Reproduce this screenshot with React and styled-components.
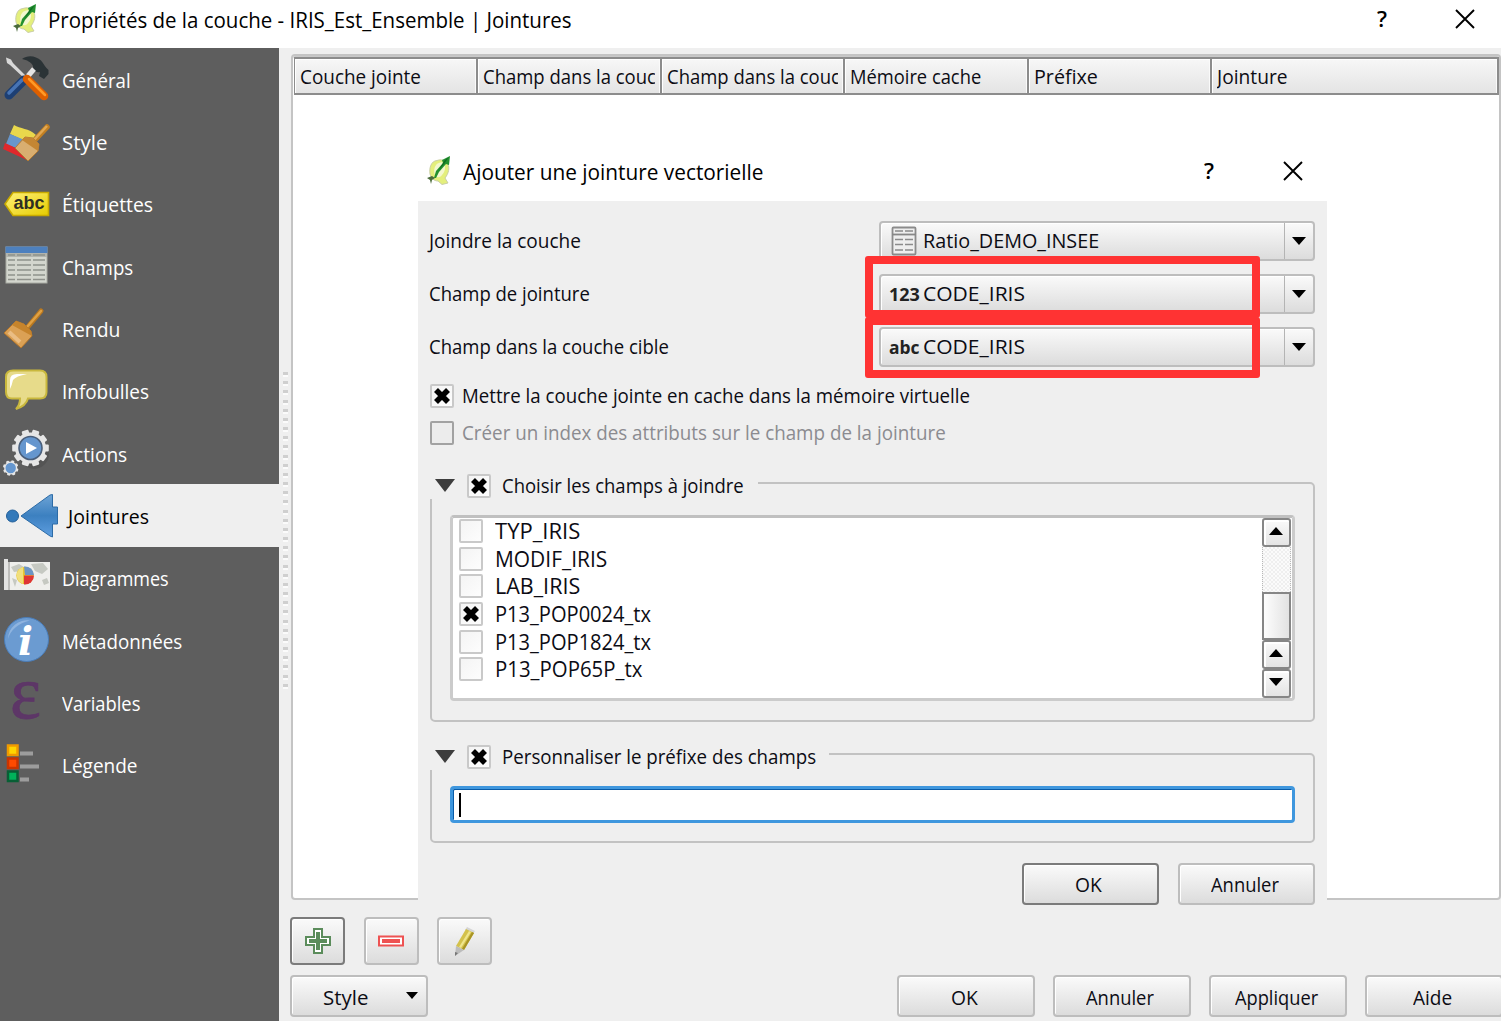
import React, { useLayoutEffect, useRef, useState } from "react";
import styled, { createGlobalStyle, css } from "styled-components";

const ui = `"Open Sans", "Noto Sans", "Liberation Sans", sans-serif`;

const GlobalStyle = createGlobalStyle`
  *, *::before, *::after { box-sizing: border-box; }
  body { margin: 0; background: #efefef; overflow: hidden; font-family: ${ui}; font-size: 20px; color: #0c0c14; }
`;

/* ---------- text set to a given measure ---------- */
const Measure = styled.span`
  display: inline-block;
  flex: none;
  width: ${(p) => p.$w}px;
  font-size: ${(p) => p.$size || 20}px;
  line-height: 28px;
  height: 28px;
  white-space: nowrap;
  text-align: left;
`;
const Run = styled.span`
  display: inline-block;
  transform-origin: 0 50%;
`;
function Label({ w, size, children }) {
  const ref = useRef(null);
  const [k, setK] = useState(1);
  useLayoutEffect(() => {
    setK(w / ref.current.offsetWidth);
  }, [w, children]);
  return (
    <Measure $w={w} $size={size}>
      <Run ref={ref} style={{ transform: `scaleX(${k})` }}>{children}</Run>
    </Measure>
  );
}

/* ---------- window ---------- */
const Window = styled.div`
  position: relative;
  width: 1501px;
  height: 1021px;
  overflow: hidden;
  display: flex;
  flex-direction: column;
  background: #efefef;
`;
const TitleBar = styled.header`
  flex: none;
  height: ${(p) => p.$h}px;
  background: #fff;
  display: flex;
  align-items: flex-start;
  padding: ${(p) => p.$pad};
  color: #000;
`;
const TitleText = styled.div`
  margin: ${(p) => p.$m};
  flex: 1;
  display: flex;
`;
const Glyph = styled.span`
  font-size: 22px;
  font-weight: 600;
  line-height: 28px;
  width: 11px;
  margin: ${(p) => p.$m};
`;
const CloseIcon = styled.svg`
  flex: none;
  width: 20px;
  height: 20px;
  margin: ${(p) => p.$m};
`;
const Body = styled.div`
  flex: 1;
  display: flex;
  min-height: 0;
`;

/* ---------- sidebar ---------- */
const Sidebar = styled.nav`
  flex: none;
  width: 279px;
  background: #5e5e5e;
`;
const NavItem = styled.div`
  height: 62.35px;
  display: flex;
  align-items: center;
  gap: 2px;
  color: #fff;
  ${(p) =>
    p.$active &&
    css`
      background: #efefef;
      color: #000;
      gap: 8px;
    `}
`;
const NavIcon = styled.svg`
  flex: none;
  width: 60px;
  height: 62px;
  overflow: visible;
`;
const NavText = styled.div`
  padding-top: 3px;
  display: flex;
`;
const Splitter = styled.div`
  flex: none;
  width: 12px;
  padding: 324px 0 0 4px;
`;
const Grip = styled.div`
  width: 5px;
  height: 318px;
  background: repeating-linear-gradient(to bottom, #cfcfcf 0 3px, #fbfbfb 3px 5px, transparent 5px 9.17px);
`;

/* ---------- main pane ---------- */
const Main = styled.main`
  flex: 1;
  min-width: 0;
  padding-top: 6px;
  display: flex;
  flex-direction: column;
`;
const Table = styled.div`
  width: 1210px;
  height: 846px;
  background: #fff;
  border: 2px solid #c4c4c4;
  border-radius: 4px;
  padding: 1px 1px 0 1px;
  box-shadow: inset 0 1px 0 #c9c9c9;
`;
const HeadRow = styled.div`
  display: grid;
  grid-template-columns: 183.4px 183.4px 183.4px 183.4px 183.4px 288px;
  height: 38px;
`;
const HeadCell = styled.div`
  border: 2px solid #8c8c8c;
  border-left-width: 1px;
  border-right-width: ${(p) => (p.$last ? 2 : 1)}px;
  box-shadow: inset 1px 1px 0 #fff, inset -1px 0 0 #fafafa;
  background: linear-gradient(#f7f7f7, #e4e4e4);
  padding: 4px 5px 0 5px;
  overflow: hidden;
`;
const Clip = styled.div`
  overflow: hidden;
  height: 29px;
`;

const face = css`
  border: 2px solid ${(p) => (p.$strong ? "#7b7b7b" : "#bdbdbd")};
  border-radius: 4px;
  background: linear-gradient(#fafafa, #dcdcdc);
  box-shadow: inset 1px 1px 0 #fff;
`;
const Tools = styled.div`
  display: flex;
  gap: 18.3px;
  margin: 17px 0 0 -0.6px;
`;
const ToolButton = styled.div`
  ${face}
  width: 55px;
  height: 48px;
  display: flex;
  align-items: center;
  justify-content: center;
`;
const Footer = styled.div`
  display: flex;
  margin: 10px 0 0 -0.6px;
`;
const Actions = styled.div`
  display: flex;
  gap: 18.6px;
  margin-left: 469.4px;
`;
const Button = styled.div`
  ${face}
  flex: none;
  width: ${(p) => p.$w || 137.4}px;
  height: 42px;
  display: flex;
  align-items: center;
  justify-content: center;
  padding: 3px 3px 0 0;
`;
const StyleButton = styled(Button)`
  justify-content: flex-start;
  padding-left: 31px;
  gap: 38px;
`;
const Down = styled.span`
  width: 0;
  height: 0;
  border: ${(p) => p.$s}px solid transparent;
  border-top: ${(p) => p.$t}px solid ${(p) => p.$c || "#000"};
  border-bottom: 0;
  margin-bottom: ${(p) => p.$mb || 0}px;
`;
const Up = styled.span`
  width: 0;
  height: 0;
  border: 7px solid transparent;
  border-bottom: 8px solid #000;
  border-top: 0;
  margin-bottom: 3px;
`;

/* ---------- dialog ---------- */
const Dialog = styled.section`
  position: absolute;
  left: 418px;
  top: 145px;
  width: 909px;
  height: 765px;
  background: #efefef;
`;
const Form = styled.div`
  padding: 20px 12px 0 11px;
  display: flex;
  flex-direction: column;
`;
const Field = styled.div`
  display: flex;
  justify-content: space-between;
  height: 40px;
  margin-bottom: 13px;
`;
const FieldLabel = styled.div`
  padding-top: 6px;
`;
const Combo = styled.div`
  ${face}
  width: 436px;
  display: flex;
`;
const ComboValue = styled.div`
  flex: 1;
  display: flex;
  align-items: center;
  padding: 0 0 0 8px;
`;
const ComboIcon = styled.span`
  width: 34px;
  height: 30px;
  display: flex;
  align-items: center;
  padding-left: ${(p) => p.$pad || 0}px;
  font-weight: bold;
  color: #222;
`;
const ComboArrow = styled.div`
  width: 29px;
  border-left: 1.5px solid #b4b4b4;
  display: flex;
  align-items: center;
  justify-content: center;
`;
const Highlight = styled.div`
  position: absolute;
  left: 447px;
  top: ${(p) => p.$top}px;
  width: 395px;
  height: ${(p) => p.$h}px;
  border: 8px solid #ff3333;
  border-radius: 3px;
`;
const CheckRow = styled.div`
  display: flex;
  align-items: center;
  gap: 8px;
  height: 24px;
  padding-left: 1px;
  margin-top: ${(p) => p.$mt}px;
  color: ${(p) => (p.$off ? "#8b8b90" : "inherit")};
`;
const Box = styled.span`
  flex: none;
  width: 24px;
  height: 24px;
  display: flex;
  align-items: center;
  justify-content: center;
  border: 2px solid ${(p) => (p.$off ? "#a2a2a2" : "#c9c9c9")};
  border-radius: 2px;
  background: ${(p) => (p.$off ? "#ececec" : "linear-gradient(135deg, #f4f4f4, #fdfdfd)")};
`;
const Group = styled.section`
  margin: ${(p) => p.$mt}px 0 0 1px;
  width: 885px;
  height: ${(p) => p.$h}px;
  border: 2px solid #c2c2c2;
  border-radius: 5px;
  padding: 0 18px;
`;
const Legend = styled.div`
  display: flex;
  align-items: center;
  height: 26px;
  width: ${(p) => p.$w}px;
  padding: 0 0 0 5px;
  margin: -11px 0 0 -20px;
  background: #efefef;
`;
const LegendBox = styled.span`
  margin: 0 11px 0 12px;
  display: flex;
`;
const LegendText = styled.span`
  display: flex;
  padding-top: 1px;
`;
const List = styled.div`
  margin: 16px 0 0;
  width: 845px;
  height: 186px;
  border: 3px solid #cbcbcb;
  border-top-color: #c0c0c0;
  border-radius: 4px;
  background: #fff;
  display: flex;
  justify-content: space-between;
`;
const Items = styled.div`
  padding: 0 0 0 6px;
`;
const Item = styled.div`
  height: 27.6px;
  display: flex;
  align-items: center;
  gap: 12px;
`;
const Scroll = styled.div`
  width: 29px;
  margin-right: 1px;
  height: 180px;
  display: flex;
  flex-direction: column;
`;
const Stepper = styled.div`
  height: 29px;
  flex: none;
  border: 2px solid #868686;
  border-radius: 3px;
  background: linear-gradient(#fafafa, #e4e4e4);
  box-shadow: inset 2px 2px 0 #fff;
  display: flex;
  align-items: center;
  justify-content: center;
  padding-right: 2px;
`;
const Track = styled.div`
  flex: 1;
  border: 1px dotted #b8b8b8;
  border-width: 0 1.5px;
  background: repeating-conic-gradient(#efefef 0 25%, #fbfbfb 0 50%) 0 0 / 4px 4px;
`;
const Thumb = styled.div`
  height: 48px;
  flex: none;
  border: 2px solid #868686;
  background: linear-gradient(90deg, #fdfdfd, #e2e2e2);
`;
const Input = styled.div`
  margin-top: 16px;
  width: 845px;
  height: 37px;
  border: 3px solid #3f97de;
  border-radius: 4px;
  box-shadow: inset 1px 1px 0 #0a5ca8;
  background: #fff;
  padding: 4px 0 0 6px;
`;
const Caret = styled.div`
  width: 2px;
  height: 24px;
  background: #000;
`;
const DialogButtons = styled.div`
  display: flex;
  justify-content: flex-end;
  gap: 18.5px;
  margin-top: 20px;
`;

/* ---------- drawings ---------- */
const Logo = styled.svg`
  flex: none;
  width: 24px;
  height: 30px;
`;
const QgisLogo = () => (
  <Logo viewBox="0 0 24 30">
    <path d="M10 4.500C4 5 2 12 3 18c1 4 4 7 8 7l4 3.500l6-1.500l-3-5C22 17 22.500 12 21 8C18 4 14 3 10 4.500z" fill="#e4ef7c" stroke="#c5c9a4" strokeWidth=".9" />
    <path d="M12 7c-4 1-6 7-4 12c1 3 5 3 7 0c3-3 4-8 2-11c-1-2-3-2-5-1z" fill="#f4f8cf" />
    <path d="M7 22L9 15L16 7L15 4L23 0L22 9L19 8L12 16L9 22Z" fill="#23912f" />
    <path d="M16 7L18 4L22 1L17 8L11 15Z" fill="#0f6b22" />
    <path d="M0 22l5-2l3 2l-3 2l-1 4l-1-4z" fill="#4a6b3b" />
  </Logo>
);
const Cross = (p) => (
  <CloseIcon {...p} viewBox="0 0 20 20">
    <path d="M1 1L19 19M19 1L1 19" stroke="#000" strokeWidth="1.9" />
  </CloseIcon>
);
const CheckSvg = styled.svg`
  flex: none;
  width: 18px;
  height: 18px;
`;
const Check = () => (
  <CheckSvg viewBox="0 0 18 18">
    <path d="M3 3L15 15M15 3L3 15" stroke="#000" strokeWidth="5.6" />
  </CheckSvg>
);
const Gear = ({ cx, cy, r, t, n }) => (
  <g fill="#e6e6e6">
    <circle cx={cx} cy={cy} r={r} />
    {Array.from({ length: n }, (_, i) => (
      <rect key={i} x={cx - t / 2} y={cy - r - t * 0.4} width={t} height={t} rx="1" transform={`rotate(${(i * 360) / n + 18} ${cx} ${cy})`} />
    ))}
  </g>
);
const icons = {
  tools: (
    <>
      <path d="M6 9.500L11 11.500L13 15L26 28L24 30L10 17L7 15Z" fill="#d8d8d8" />
      <path d="M22 11C28 6.500 36 8 41 12.500C44 16 45 19 48.500 22L48.500 26L44 31L39 28L40 24C36 25 33 22 33 18C31 14 27 12 22 11Z" fill="#2b3336" />
      <path d="M28 28L34 21" stroke="#e4e4e4" strokeWidth="5" />
      <path d="M24 32L9 47" stroke="#1d3f73" strokeWidth="9" strokeLinecap="round" />
      <path d="M22 32L9 45" stroke="#4774b4" strokeWidth="3.5" strokeLinecap="round" />
      <path d="M27 31L44 48" stroke="#dd5f00" strokeWidth="8.500" strokeLinecap="round" />
      <path d="M29 31L45 47" stroke="#ff9a26" strokeWidth="2.500" strokeLinecap="round" />
    </>
  ),
  style: (
    <>
      <path d="M14 14C20 18 29 17 36 24L29 32L10 23Z" fill="#e9d84c" />
      <path d="M10 23L27 30L18 38L6 33Z" fill="#6796cb" />
      <path d="M5 32L18 38L29 50L3 38Z" fill="#e0282c" />
      <path d="M47 16L34 30" stroke="#c27f22" strokeWidth="5.500" strokeLinecap="round" />
      <path d="M47 15L34 29" stroke="#e2a853" strokeWidth="2.500" />
      <path d="M25 26L33 27L39 33L38 40L28 50L15 37Z" fill="#d9ae70" stroke="#b37b35" />
      <path d="M25 26L33 27L39 33L38 40L22 29Z" fill="#c48633" />
    </>
  ),
  tag: (
    <>
      <path d="M5 31L13 19.500H48.500V42.500H13Z" fill="url(#tagFill)" stroke="#c9ab00" strokeWidth="1.6" />
      <text x="13.500" y="36" fontFamily="Liberation Sans" fontWeight="bold" fontSize="18" textLength="31" fill="#2f2f22">abc</text>
    </>
  ),
  fields: (
    <>
      <rect x="6" y="12" width="41" height="36" fill="#d3d6ce" stroke="#a9aca4" />
      <rect x="5.500" y="11.500" width="42" height="6.500" fill="#4d80be" />
      <rect x="6" y="18" width="41" height="4" fill="#b2b4ae" />
      {[20, 25, 30, 35, 40, 44.5].map((y) => (
        <path key={y} d={`M8 ${y}h7M17 ${y}h14M33 ${y}h12`} stroke="#8f928c" strokeWidth="1.500" />
      ))}
    </>
  ),
  broom: (
    <>
      <path d="M41 13L27 30" stroke="#b97820" strokeWidth="5" strokeLinecap="round" />
      <path d="M41 13L27 29" stroke="#e0a144" strokeWidth="2.500" strokeLinecap="round" />
      <path d="M16 23L24 26L31 33L32 38L21 50L4 35Z" fill="#dba155" stroke="#b5762a" />
      <path d="M16 23L24 26L31 33L32 38L12 27Z" fill="#c6842c" />
      <path d="M9 34L20 44" stroke="#eabd84" strokeWidth="4" />
    </>
  ),
  bubble: (
    <>
      <path d="M13 10.500H40Q46.500 10.500 46.500 17V32Q46.500 38.500 40 38.500H28Q26 46 16 49Q20 45 20 38.500H12Q6 38.500 6 32V17Q6 10.500 13 10.500Z" fill="#e7db8a" stroke="#c9b83d" strokeWidth="2" />
      <path d="M10 29V20Q10 14 17 14H27Q16 16 13 20Q12 25 10 29Z" fill="#fff" />
    </>
  ),
  gears: (
    <>
      <circle cx="34" cy="32" r="15" fill="#3f3f3f" opacity=".3" />
      <Gear cx={30.5} cy={26} r={15.5} t={7} n={10} />
      <circle cx="30.500" cy="26" r="11.500" fill="#6596ce" stroke="#4a5f7b" strokeWidth="1.600" />
      <path d="M26 20V32L37 26Z" fill="#fff" />
      <Gear cx={10.7} cy={46} r={6.5} t={3.2} n={8} />
      <circle cx="10.700" cy="46" r="5.200" fill="#6596ce" />
    </>
  ),
  join: (
    <>
      <circle cx="12.500" cy="31" r="6" fill="#3379ba" stroke="#225f99" />
      <path d="M21 31L50 10L52.500 9.500V22H57.500V39H52.500V52L50 51Z" fill="url(#joinFill)" stroke="#2c6ba6" />
    </>
  ),
  map: (
    <>
      <rect x="8" y="15" width="42" height="28" fill="#efefec" />
      <path d="M11 20l8-3l5 3l-3 4l-7 1zM31 17l12-1l5 6l-6 5l-7-3zM42 33l5-2l2 5l-5 2zM12 31l5 2l-2 7z" fill="#c6c9c2" />
      <circle cx="25" cy="28.500" r="8.700" fill="#e7c531" />
      <path d="M24 19.500A9 9 0 0 1 34 28H25Z" fill="#6c94c4" />
      <path d="M34 28.500A9 9 0 0 1 24 37.500V28.500Z" fill="#df3535" />
      <path d="M17 26A9 9 0 0 1 23 20V37A9 9 0 0 1 17 26Z" fill="#f1df7c" />
      <path d="M6 12V43" stroke="#e2e2e2" strokeWidth="4" />
      <path d="M9 15V43" stroke="#8a8a8a" strokeWidth="1" />
    </>
  ),
  info: (
    <>
      <circle cx="26.500" cy="30.500" r="22" fill="#6b9bd1" stroke="#4a7db9" />
      <path d="M8 30A19 19 0 0 1 30 11.500Q12 16 8 30Z" fill="#a7c5e8" opacity=".6" />
      <text x="18" y="46" fontFamily="DejaVu Serif" fontStyle="italic" fontWeight="bold" fontSize="40" textLength="15" lengthAdjust="spacingAndGlyphs" fill="#fff">i</text>
    </>
  ),
  epsilon: (
    <text x="10" y="46" fontFamily="Liberation Serif" fontSize="76" fill="#5d3667" stroke="#5d3667" strokeWidth=".8" textLength="31" lengthAdjust="spacingAndGlyphs">ε</text>
  ),
  legend: (
    <>
      <rect x="8" y="11.500" width="9.500" height="9.500" fill="#ffd500" stroke="#f09a00" strokeWidth="2.500" />
      <rect x="8" y="24.500" width="9.500" height="9.500" fill="#ff4a00" stroke="#c93400" strokeWidth="2.500" />
      <rect x="8" y="37.500" width="9.500" height="9.500" fill="#00b35a" stroke="#075f35" strokeWidth="2.500" />
      <path d="M20 19.500H33M20 32.500H39M20 45.500H29" stroke="#9d9d9d" strokeWidth="3.800" />
    </>
  ),
};

const sections = [
  ["tools", "Général", 69],
  ["style", "Style", 45],
  ["tag", "Étiquettes", 91],
  ["fields", "Champs", 71],
  ["broom", "Rendu", 58],
  ["bubble", "Infobulles", 87],
  ["gears", "Actions", 65],
  ["join", "Jointures", 81],
  ["map", "Diagrammes", 107],
  ["info", "Métadonnées", 120],
  ["epsilon", "Variables", 78],
  ["legend", "Légende", 76],
];
const columns = [
  ["Couche jointe", 121],
  ["Champ dans la couche", 195],
  ["Champ dans la couche", 195],
  ["Mémoire cache", 131],
  ["Préfixe", 64],
  ["Jointure", 71],
];
const fieldItems = [
  ["TYP_IRIS", 85],
  ["MODIF_IRIS", 112],
  ["LAB_IRIS", 85],
  ["P13_POP0024_tx", 156, true],
  ["P13_POP1824_tx", 156],
  ["P13_POP65P_tx", 147],
];

const TableIcon = () => (
  <svg width="26" height="30" viewBox="0 0 26 30">
    <rect x="1.500" y="1.500" width="23" height="27" rx="1" fill="#eee" stroke="#8b8b8b" strokeWidth="1.800" />
    <path d="M1 8.500H25" stroke="#878787" strokeWidth="1.800" />
    {[5, 13.5, 18.5, 24].map((y) => (
      <path key={y} d={`M4 ${y}h8M14 ${y}h8`} stroke="#8b8b8b" strokeWidth="1.500" />
    ))}
  </svg>
);

function FieldRow({ label, lw, icon, pad, value, vw }) {
  return (
    <Field>
      <FieldLabel><Label w={lw}>{label}</Label></FieldLabel>
      <Combo>
        <ComboValue>
          <ComboIcon $pad={pad}>{icon}</ComboIcon>
          <Label w={vw}>{value}</Label>
        </ComboValue>
        <ComboArrow><Down $s={7} $t={8} /></ComboArrow>
      </Combo>
    </Field>
  );
}

function GroupLegend({ w, tw, children }) {
  return (
    <Legend $w={w}>
      <Down $s={10} $t={13} $c="#3d3d3d" />
      <LegendBox><Box><Check /></Box></LegendBox>
      <LegendText><Label w={tw}>{children}</Label></LegendText>
    </Legend>
  );
}

export default function App() {
  return (
    <Window>
      <GlobalStyle />
      <TitleBar $h={48} $pad="4px 0 0 13px">
        <QgisLogo />
        <TitleText $m="2px 0 0 11px"><Label w={524} size={21.5}>Propriétés de la couche - IRIS_Est_Ensemble | Jointures</Label></TitleText>
        <Glyph $m="0">?</Glyph>
        <Cross $m="5px 26px 0 67px" />
      </TitleBar>
      <Body>
        <Sidebar>
          {sections.map(([icon, text, w]) => (
            <NavItem key={text} $active={icon === "join"}>
              <NavIcon viewBox="0 0 60 62">
                <defs>
                  <linearGradient id="tagFill" x1="0" y1="0" x2="1" y2="1"><stop offset="0" stopColor="#fff27a" /><stop offset="1" stopColor="#e6cc00" /></linearGradient>
                  <linearGradient id="joinFill" x1="0" y1="0" x2="0" y2="1"><stop offset="0" stopColor="#6da4d6" /><stop offset=".5" stopColor="#3c80c0" /><stop offset="1" stopColor="#5f9fe0" /></linearGradient>
                </defs>
                {icons[icon]}
              </NavIcon>
              <NavText><Label w={w}>{text}</Label></NavText>
            </NavItem>
          ))}
        </Sidebar>
        <Splitter><Grip /></Splitter>
        <Main>
          <Table>
            <HeadRow>
              {columns.map(([text, w], i) => (
                <HeadCell key={i} $last={i === 5}><Clip><Label w={w}>{text}</Label></Clip></HeadCell>
              ))}
            </HeadRow>
          </Table>
          <Tools>
            <ToolButton $strong>
              <svg width="28" height="28" viewBox="0 0 28 28">
                <path d="M10 2H18V10H26V18H18V26H10V18H2V10H10Z" fill="#fff" stroke="#5b8c5b" strokeWidth="2" />
                <path d="M14 5V23M5 14H23" stroke="#5b8c5b" strokeWidth="4" />
              </svg>
            </ToolButton>
            <ToolButton>
              <svg width="28" height="12" viewBox="0 0 28 12">
                <rect x="2" y="1.500" width="24" height="9" fill="#fff" stroke="#ee5252" strokeWidth="2" />
                <path d="M5 6H23" stroke="#ee5252" strokeWidth="4" />
              </svg>
            </ToolButton>
            <ToolButton>
              <svg width="24" height="32" viewBox="0 0 24 32">
                <path d="M14 2L22 6L20 9L12 5Z" fill="#d5d5d5" />
                <path d="M13 4L21 8L11 25L3 21Z" fill="#d3c14b" />
                <path d="M16 6L18 7L8 23L6 22Z" fill="#efe58c" />
                <path d="M19 7L21 8L11 25L9 24Z" fill="#a89425" />
                <path d="M3 21L11 25L2 31Z" fill="#bcbcbc" />
                <path d="M2 27L5 28L2 31Z" fill="#777" />
              </svg>
            </ToolButton>
          </Tools>
          <Footer>
            <StyleButton><Label w={45}>Style</Label><Down $s={6} $t={7} $mb={5} /></StyleButton>
            <Actions>
              <Button><Label w={27}>OK</Label></Button>
              <Button><Label w={68}>Annuler</Label></Button>
              <Button><Label w={83}>Appliquer</Label></Button>
              <Button><Label w={39}>Aide</Label></Button>
            </Actions>
          </Footer>
        </Main>
      </Body>

      <Dialog>
        <TitleBar $h={55.5} $pad="11px 0 0 9px">
          <QgisLogo />
          <TitleText $m="2px 0 0 12px"><Label w={300} size={21.5}>Ajouter une jointure vectorielle</Label></TitleText>
          <Glyph $m="0">?</Glyph>
          <Cross $m="5px 24px 0 68px" />
        </TitleBar>
        <Form>
          <FieldRow label="Joindre la couche" lw={152} icon={<TableIcon />} pad={1.5} value="Ratio_DEMO_INSEE" vw={176} />
          <FieldRow label="Champ de jointure" lw={161} icon={<Label w={31} size={18}>123</Label>} value="CODE_IRIS" vw={102} />
          <FieldRow label="Champ dans la couche cible" lw={240} icon={<Label w={31} size={18}>abc</Label>} value="CODE_IRIS" vw={102} />
          <CheckRow $mt={4}><Box><Check /></Box><Label w={508}>Mettre la couche jointe en cache dans la mémoire virtuelle</Label></CheckRow>
          <CheckRow $mt={13} $off><Box $off /><Label w={484}>Créer un index des attributs sur le champ de la jointure</Label></CheckRow>
          <Group $mt={37} $h={240}>
            <GroupLegend w={328} tw={242}>Choisir les champs à joindre</GroupLegend>
            <List>
              <Items>
                {fieldItems.map(([text, w, on]) => (
                  <Item key={text}><Box>{on && <Check />}</Box><Label w={w} size={21.5}>{text}</Label></Item>
                ))}
              </Items>
              <Scroll>
                <Stepper><Up /></Stepper>
                <Track />
                <Thumb />
                <Stepper><Up /></Stepper>
                <Stepper><Down $s={7} $t={8} $mb={3} /></Stepper>
              </Scroll>
            </List>
          </Group>
          <Group $mt={31} $h={90}>
            <GroupLegend w={399} tw={314}>Personnaliser le préfixe des champs</GroupLegend>
            <Input><Caret /></Input>
          </Group>
          <DialogButtons>
            <Button $strong><Label w={27}>OK</Label></Button>
            <Button><Label w={68}>Annuler</Label></Button>
          </DialogButtons>
        </Form>
        <Highlight $top={111} $h={62} />
        <Highlight $top={172} $h={61} />
      </Dialog>
    </Window>
  );
}
